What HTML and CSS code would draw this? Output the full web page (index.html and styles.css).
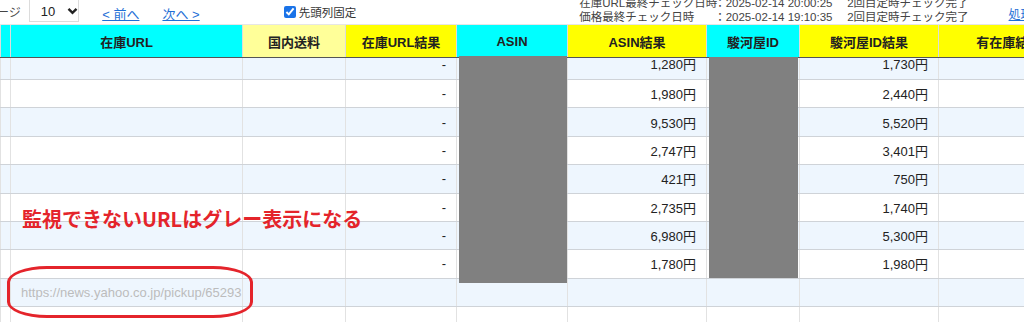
FILE: index.html
```html
<!DOCTYPE html>
<html lang="ja">
<head>
  <meta charset="UTF-8" />
  <meta name="viewport" content="width=device-width, initial-scale=1.0"/>
  <title>在庫監視一覧</title>
  <link rel="stylesheet" href="styles.css">
</head>
<body>

  <div class="page">

    <div class="toolbar">
      <span class="pager-label">ページ</span>
      <div class="select-box">
        <span>10</span>
        <svg class="chevron" width="11" height="8" viewBox="0 0 11 8"><path d="M1.5 1.8 L5.5 5.8 L9.5 1.8" fill="none" stroke="#222" stroke-width="2.4"/></svg>
      </div>
      <a class="nav-link" href="#">&lt; 前へ</a>
      <a class="nav-link" href="#">次へ &gt;</a>
      <label class="fix-col"><input type="checkbox" checked> 先頭列固定</label>
      <div class="check-info">
        <div class="info-line"><span class="info-label">在庫URL最終チェック日時</span><span class="info-time">：2025-02-14 20:00:25</span><span>2回目定時チェック完了</span></div>
        <div class="info-line"><span class="info-label">価格最終チェック日時</span><span class="info-time">：2025-02-14 19:10:35</span><span>2回目定時チェック完了</span></div>
      </div>
      <a class="nav-link run-link" href="#">処理</a>
    </div>

    <table class="grid">
      <colgroup>
        <col style="width:10px">
        <col style="width:232px">
        <col style="width:103px">
        <col style="width:111px">
        <col style="width:111px">
        <col style="width:139px">
        <col style="width:93px">
        <col style="width:139px">
        <col style="width:140px">
      </colgroup>
      <thead>
        <tr>
          <th class="c-cyan"></th>
          <th class="c-cyan">在庫URL</th>
          <th class="c-pale">国内送料</th>
          <th class="c-yellow">在庫URL結果</th>
          <th class="c-cyan">ASIN</th>
          <th class="c-yellow">ASIN結果</th>
          <th class="c-cyan">駿河屋ID</th>
          <th class="c-yellow">駿河屋ID結果</th>
          <th class="c-yellow">有在庫結果</th>
        </tr>
      </thead>
      <tbody id="rows"></tbody>
    </table>

    <div class="mask mask-asin"></div>
    <div class="mask mask-suruga"></div>

    <p class="note">監視できないURLはグレー表示になる</p>
    <div class="ring"></div>

  </div>

  <script>
    const items = [
      { asin: "1,280円", suruga: "1,730円" },
      { asin: "1,980円", suruga: "2,440円" },
      { asin: "9,530円", suruga: "5,520円" },
      { asin: "2,747円", suruga: "3,401円" },
      { asin: "421円", suruga: "750円" },
      { asin: "2,735円", suruga: "1,740円" },
      { asin: "6,980円", suruga: "5,300円" },
      { asin: "1,780円", suruga: "1,980円" }
    ];

    const tbody = document.getElementById("rows");

    function cells(list) {
      return list.map(c => `<td class="${c.cls || ""}">${c.text || ""}</td>`).join("");
    }

    items.forEach((item, index) => {
      const tr = document.createElement("tr");
      if (index === 0) tr.className = "peek";
      tr.innerHTML = cells([
        {}, {}, {},
        { cls: "num", text: "-" },
        {},
        { cls: "num", text: item.asin },
        {},
        { cls: "num", text: item.suruga },
        {}
      ]);
      tbody.appendChild(tr);
    });

    // 監視できない行
    const dead = document.createElement("tr");
    dead.innerHTML = cells([{}, { cls: "dead-url", text: "https://news.yahoo.co.jp/pickup/6529312" }, {}, {}, {}, {}, {}, {}, {}]);
    tbody.appendChild(dead);

    const empty = document.createElement("tr");
    empty.innerHTML = cells([{}, {}, {}, {}, {}, {}, {}, {}, {}]);
    tbody.appendChild(empty);
  </script>

</body>
</html>
```

FILE: styles.css
```css
:root {
  --cyan: #00ffff;
  --yellow: #ffff00;
  --pale-yellow: #ffff99;
  --row-alt: #eef6fe;
  --link: #1f6fd6;
  --note-red: #e4242b;
}

body {
  margin: 0;
  font-family: "Liberation Sans", "Noto Sans CJK JP", sans-serif;
  color: #222;
  background: #fff;
}

.page {
  position: relative;
  width: 1024px;
  height: 322px;
  overflow: hidden;
}

/* ツールバー */
.toolbar {
  display: flex;
  align-items: flex-start;
  height: 25px;
  white-space: nowrap;
  border-bottom: 1px solid #e6e6e6;
  box-sizing: border-box;
}

.pager-label {
  margin-left: -15px;
  padding-top: 3px;
  font-size: 12px;
  color: #444;
}

.select-box {
  display: flex;
  align-items: center;
  gap: 12px;
  margin-left: 8px;
  margin-top: -6px;
  width: 55px;
  height: 28px;
  padding: 6px 0 0 11px;
  box-sizing: border-box;
  border: 1px solid #dcdcdc;
  font-size: 13px;
}

.chevron {
  display: block;
}

.nav-link {
  color: var(--link);
  font-size: 13px;
  padding-top: 4px;
  margin-left: 23px;
}

.fix-col {
  display: flex;
  align-items: center;
  margin-left: 84px;
  padding-top: 4px;
  font-size: 11.5px;
  color: #333;
}

.fix-col input {
  width: 12px;
  height: 12px;
  margin: 0 3px 0 0;
  accent-color: #1a73e8;
}

.check-info {
  margin-left: 223px;
  margin-top: -4px;
  font-size: 11.5px;
  line-height: 14px;
  color: #444;
}

.info-line {
  display: flex;
}

.info-label {
  width: 135px;
}

.info-time {
  width: 133px;
}

.run-link {
  margin-left: 40px;
  padding-top: 5px;
  font-size: 12px;
}

/* 一覧表 */
.grid {
  table-layout: fixed;
  border-collapse: collapse;
  width: 1078px;
  font-size: 13px;
}

.grid th {
  height: 32px;
  padding: 0;
  font-weight: bold;
  border-left: 1px solid #dcdcdc;
  border-bottom: 1px solid #555;
  text-align: center;
  white-space: nowrap;
  overflow: hidden;
}

.c-cyan { background: var(--cyan); }
.c-yellow { background: var(--yellow); }
.c-pale { background: var(--pale-yellow); }

.grid td {
  height: 28.375px;
  padding: 0 10px;
  border-left: 1px solid #e2e2e2;
  border-bottom: 1px solid #cfd3d8;
  box-sizing: border-box;
  white-space: nowrap;
  overflow: hidden;
}

.grid tbody tr:nth-child(odd) td {
  background: var(--row-alt);
}

.grid tr.peek td {
  height: 22px;
  line-height: 14px;
  vertical-align: top;
}

.grid td.num {
  text-align: right;
}

.grid td.dead-url {
  color: #bcbcbc;
  text-overflow: clip;
}

/* 伏せ字 */
.mask {
  position: absolute;
  background: #808080;
}

.mask-asin {
  left: 459px;
  top: 56px;
  width: 108px;
  height: 227px;
}

.mask-suruga {
  left: 709px;
  top: 57px;
  width: 89px;
  height: 221px;
}

/* 注記 */
.note {
  position: absolute;
  left: 22px;
  top: 204px;
  margin: 0;
  font-family: "Noto Sans CJK JP", sans-serif;
  font-size: 20px;
  font-weight: 700;
  color: var(--note-red);
}

.ring {
  position: absolute;
  left: 7px;
  top: 266px;
  width: 246px;
  height: 52px;
  box-sizing: border-box;
  border: 3px solid var(--note-red);
  border-radius: 40px / 16px;
}
```
